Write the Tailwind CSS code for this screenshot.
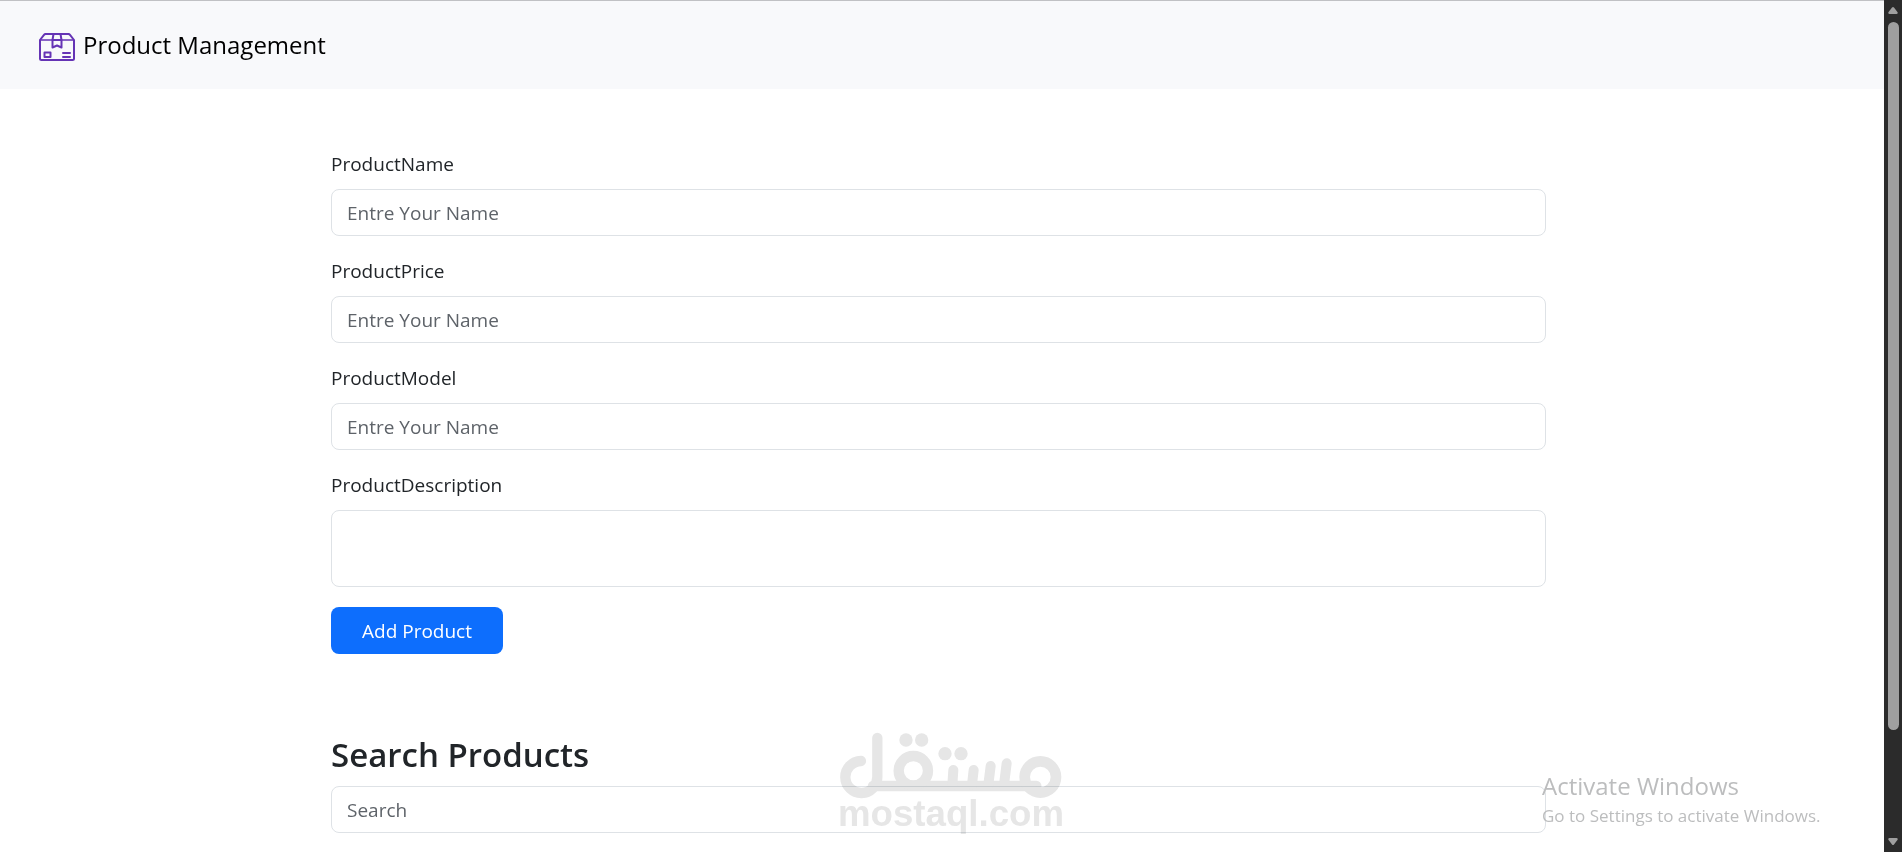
<!DOCTYPE html>
<html lang="en">
<head>
    <meta charset="UTF-8">
    <meta name="viewport" content="width=device-width, initial-scale=1.0">
    <script src="https://cdn.jsdelivr.net/npm/@tailwindcss/browser@4"></script>
    <title>Product Management</title>
</head>
<body class="flex h-dvh overflow-hidden bg-white font-['Open_Sans',sans-serif] text-[19px] leading-[30px] text-[#212529]">
    <div class="grow min-w-0 overflow-hidden">
        <nav class="h-[89px] border-t border-[#c0c1c4] bg-[#f8f9fb] px-[39px] flex items-center">
            <a href="#" class="flex items-center gap-2 text-2xl text-black">
                <svg class="w-9 h-7 mt-1" viewBox="0 0 36 28" fill="none" stroke="#6534b5" stroke-width="2" stroke-linejoin="round" stroke-linecap="round">
                    <path d="M1 7v18.5a1.500 1.500 0 0 0 1.500 1.500h31a1.500 1.500 0 0 0 1.500-1.500V7l-4-5.200a2 2 0 0 0-1.600-.8H6.600a2 2 0 0 0-1.600.8L1 7z"/>
                    <path d="M1.500 7H13M23 7h11.500" stroke-width="1.600"/>
                    <path d="M14.500 1L13.500 7v7.500l4.500-2 4.500 2V7l-1-6M13.500 7h9"/>
                    <path d="M5.500 19.500h6v4.500h-6zM24 20h7M24 24h7" stroke-width="2"/>
                </svg>
                <span>Product Management</span>
            </a>
        </nav>

        <main class="pl-[331px] pr-[338px] pt-[60px]">
            <form class="flex flex-col gap-5">
                <div class="flex flex-col gap-[10px]">
                    <label for="productName">ProductName</label>
                    <input type="text" id="productName" placeholder="Entre Your Name" class="w-full h-[47px] px-[15px] border border-[#dee2e6] rounded-lg placeholder:text-[#5e6369]">
                </div>
                <div class="flex flex-col gap-[10px]">
                    <label for="productPrice">ProductPrice</label>
                    <input type="text" id="productPrice" placeholder="Entre Your Name" class="w-full h-[47px] px-[15px] border border-[#dee2e6] rounded-lg placeholder:text-[#5e6369]">
                </div>
                <div class="flex flex-col gap-[10px]">
                    <label for="productModel">ProductModel</label>
                    <input type="text" id="productModel" placeholder="Entre Your Name" class="w-full h-[47px] px-[15px] border border-[#dee2e6] rounded-lg placeholder:text-[#5e6369]">
                </div>
                <div class="flex flex-col gap-[10px]">
                    <label for="productDescription">ProductDescription</label>
                    <textarea id="productDescription" class="w-full h-[77px] px-[15px] py-2 border border-[#dee2e6] rounded-lg resize-none"></textarea>
                </div>
                <button type="button" class="self-start h-[47px] px-[31px] bg-[#0d6efd] text-white rounded-lg">Add Product</button>
            </form>

            <section class="mt-20 flex flex-col gap-[10px]">
                <h3 class="text-[33px] leading-[42px] font-semibold"><label for="search">Search Products</label></h3>
                <input type="text" id="search" placeholder="Search" class="w-full h-[47px] px-[15px] border border-[#dee2e6] rounded-lg placeholder:text-[#5e6369]">
            </section>
        </main>
    </div>

    <!-- scrollbar -->
    <div class="w-[18px] shrink-0 bg-[#2b2b2b] flex flex-col items-center py-[7px]">
        <svg class="w-[10px] h-[7px] shrink-0" viewBox="0 0 10 7" fill="#9f9f9f"><path d="M4 .6Q5-.4 6 .6L9.600 5.200Q10 7 8.500 7h-7Q0 7 .4 5.200z"/></svg>
        <div class="mt-2 w-[11px] h-[708px] bg-[#9f9f9f] rounded-full"></div>
        <svg class="mt-auto w-[10px] h-[7px] shrink-0" viewBox="0 0 10 7" fill="#9f9f9f"><path d="M4 6.400Q5 7.400 6 6.400L9.600 1.800Q10 0 8.500 0h-7Q0 0 .4 1.800z"/></svg>
    </div>

    <!-- mostaql watermark -->
    <svg class="absolute bottom-[14px] left-1/2 -translate-x-1/2 w-[224px] h-[106px] overflow-visible mix-blend-multiply pointer-events-none" viewBox="58 36 672 318" fill="none" stroke="#e6e6e6" stroke-linecap="round">
        <path d="M124 123A48 48 0 1 0 173 170V54" stroke-width="31"/>
        <path d="M160 198H650" stroke-width="31"/>
        <circle cx="281" cy="152" r="44" stroke-width="31"/>
        <circle cx="662" cy="171" r="47" stroke-width="32"/>
        <path d="M401 150L398 194M462 150L457 194M513 138L506 194M561 130L553 194" stroke-width="30"/>
        <g fill="#e6e6e6" stroke="none">
            <circle cx="259" cy="60" r="20"/>
            <circle cx="306" cy="60" r="20"/>
            <circle cx="376" cy="101" r="20"/>
            <circle cx="424" cy="101" r="20"/>
            <text x="55" y="319" font-family="Liberation Sans, sans-serif" font-size="110" font-weight="700">mostaql.com</text>
        </g>
    </svg>

    <!-- windows activation notice -->
    <div class="absolute right-[75px] bottom-[22px] w-[285px] text-[#bcbdbe] whitespace-nowrap pointer-events-none">
        <p class="text-2xl leading-[32px]">Activate Windows</p>
        <p class="text-[17px] leading-[28px]">Go to Settings to activate Windows.</p>
    </div>
</body>
</html>
